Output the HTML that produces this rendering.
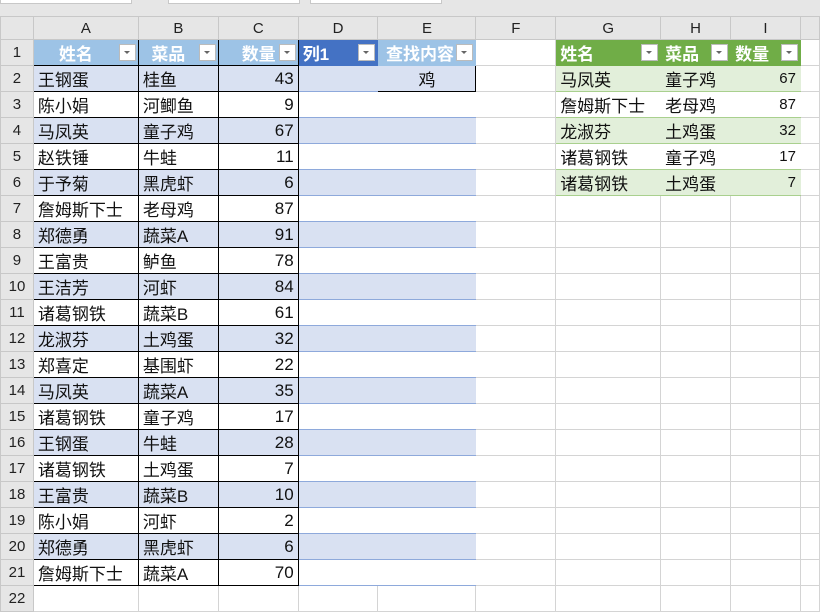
<!DOCTYPE html><html><head><meta charset="utf-8"><style>
body{margin:0;width:820px;height:602px;overflow:hidden;background:#fff;font-family:"Liberation Sans","Noto Sans CJK SC",sans-serif;position:relative}
.top{position:absolute;left:0;top:0;width:820px;height:16px;background:#e6e6e6;border-bottom:1px solid #c8c8c8}
.top i{position:absolute;top:0;height:3px;background:#fff;border:1px solid #c8c8c8;border-top:0}
table{position:absolute;left:0;top:16px;border-collapse:collapse;table-layout:fixed}
td{height:25px;border:1px solid #d4d4d4;padding:0 4px;font-size:17px;white-space:nowrap;overflow:hidden;color:#111}
tr.h td{height:22px;background:#e6e6e6;text-align:center;font-size:15px;border-color:#c8c8c8;color:#222}
td.r{background:#e6e6e6;text-align:center;font-size:15px;border-color:#c8c8c8;color:#222;padding:0}
.k{border:1px solid #000}
.n{text-align:right}
.b{background:#d9e1f2}
.bd{background:#d9e1f2;border-color:#d9e1f2 #d9e1f2 #8ea9db #d9e1f2}
.wd{border-color:#fff #fff #8ea9db #fff}
.hb{background:#9dc3e6;color:#fff;font-weight:bold;position:relative}
.hd{background:#4472c4;color:#fff;font-weight:bold;position:relative;border-color:#4472c4}
.hg{background:#70ad47;color:#fff;font-weight:bold;position:relative;border-color:#70ad47}
.g{background:#e2efda;border-color:#a9d08e #e2efda}
.gw{border-color:#a9d08e #fff}
.g.n,.gw.n{font-size:15px}
.dd{position:absolute;right:2px;top:4px;width:17px;height:17px;background:#fff;border:1px solid #bbb;box-sizing:border-box}
.dd:after{content:"";position:absolute;left:4px;top:6px;border-left:3px solid transparent;border-right:3px solid transparent;border-top:3px solid #666}
</style></head><body>
<div class="top"><i style="left:0;width:130px"></i><i style="left:168px;width:130px"></i><i style="left:310px;width:130px"></i></div>
<table>
<colgroup><col style="width:33px"><col style="width:105px"><col style="width:80px"><col style="width:80px"><col style="width:80px"><col style="width:98px"><col style="width:80px"><col style="width:105px"><col style="width:70px"><col style="width:70px"><col style="width:19px"></colgroup>
<tr class="h"><td></td><td>A</td><td>B</td><td>C</td><td>D</td><td>E</td><td>F</td><td>G</td><td>H</td><td>I</td><td></td></tr>
<tr><td class="r">1</td><td class="hb k" style="text-align:center;padding-right:24px">姓名<span class="dd"></span></td><td class="hb k" style="text-align:center;padding-right:24px">菜品<span class="dd"></span></td><td class="hb k" style="text-align:right;padding-right:22px">数量<span class="dd"></span></td><td class="hd">列1<span class="dd"></span></td><td class="hb" style="text-align:center;padding-right:18px;border-color:#9dc3e6">查找内容<span class="dd"></span></td><td></td><td class="hg">姓名<span class="dd"></span></td><td class="hg">菜品<span class="dd"></span></td><td class="hg">数量<span class="dd"></span></td><td></td></tr>
<tr><td class="r">2</td><td class="k b">王钢蛋</td><td class="k b">桂鱼</td><td class="k b n">43</td><td class="bd"></td><td class="k b" style="text-align:center">鸡</td><td></td><td class="g">马凤英</td><td class="g">童子鸡</td><td class="g n">67</td><td></td></tr>
<tr><td class="r">3</td><td class="k">陈小娟</td><td class="k">河鲫鱼</td><td class="k n">9</td><td class="wd"></td><td class="wd"></td><td></td><td class="gw">詹姆斯下士</td><td class="gw">老母鸡</td><td class="gw n">87</td><td></td></tr>
<tr><td class="r">4</td><td class="k b">马凤英</td><td class="k b">童子鸡</td><td class="k b n">67</td><td class="bd"></td><td class="bd"></td><td></td><td class="g">龙淑芬</td><td class="g">土鸡蛋</td><td class="g n">32</td><td></td></tr>
<tr><td class="r">5</td><td class="k">赵铁锤</td><td class="k">牛蛙</td><td class="k n">11</td><td class="wd"></td><td class="wd"></td><td></td><td class="gw">诸葛钢铁</td><td class="gw">童子鸡</td><td class="gw n">17</td><td></td></tr>
<tr><td class="r">6</td><td class="k b">于予菊</td><td class="k b">黑虎虾</td><td class="k b n">6</td><td class="bd"></td><td class="bd"></td><td></td><td class="g">诸葛钢铁</td><td class="g">土鸡蛋</td><td class="g n">7</td><td></td></tr>
<tr><td class="r">7</td><td class="k">詹姆斯下士</td><td class="k">老母鸡</td><td class="k n">87</td><td class="wd"></td><td class="wd"></td><td></td><td></td><td></td><td></td><td></td></tr>
<tr><td class="r">8</td><td class="k b">郑德勇</td><td class="k b">蔬菜A</td><td class="k b n">91</td><td class="bd"></td><td class="bd"></td><td></td><td></td><td></td><td></td><td></td></tr>
<tr><td class="r">9</td><td class="k">王富贵</td><td class="k">鲈鱼</td><td class="k n">78</td><td class="wd"></td><td class="wd"></td><td></td><td></td><td></td><td></td><td></td></tr>
<tr><td class="r">10</td><td class="k b">王洁芳</td><td class="k b">河虾</td><td class="k b n">84</td><td class="bd"></td><td class="bd"></td><td></td><td></td><td></td><td></td><td></td></tr>
<tr><td class="r">11</td><td class="k">诸葛钢铁</td><td class="k">蔬菜B</td><td class="k n">61</td><td class="wd"></td><td class="wd"></td><td></td><td></td><td></td><td></td><td></td></tr>
<tr><td class="r">12</td><td class="k b">龙淑芬</td><td class="k b">土鸡蛋</td><td class="k b n">32</td><td class="bd"></td><td class="bd"></td><td></td><td></td><td></td><td></td><td></td></tr>
<tr><td class="r">13</td><td class="k">郑喜定</td><td class="k">基围虾</td><td class="k n">22</td><td class="wd"></td><td class="wd"></td><td></td><td></td><td></td><td></td><td></td></tr>
<tr><td class="r">14</td><td class="k b">马凤英</td><td class="k b">蔬菜A</td><td class="k b n">35</td><td class="bd"></td><td class="bd"></td><td></td><td></td><td></td><td></td><td></td></tr>
<tr><td class="r">15</td><td class="k">诸葛钢铁</td><td class="k">童子鸡</td><td class="k n">17</td><td class="wd"></td><td class="wd"></td><td></td><td></td><td></td><td></td><td></td></tr>
<tr><td class="r">16</td><td class="k b">王钢蛋</td><td class="k b">牛蛙</td><td class="k b n">28</td><td class="bd"></td><td class="bd"></td><td></td><td></td><td></td><td></td><td></td></tr>
<tr><td class="r">17</td><td class="k">诸葛钢铁</td><td class="k">土鸡蛋</td><td class="k n">7</td><td class="wd"></td><td class="wd"></td><td></td><td></td><td></td><td></td><td></td></tr>
<tr><td class="r">18</td><td class="k b">王富贵</td><td class="k b">蔬菜B</td><td class="k b n">10</td><td class="bd"></td><td class="bd"></td><td></td><td></td><td></td><td></td><td></td></tr>
<tr><td class="r">19</td><td class="k">陈小娟</td><td class="k">河虾</td><td class="k n">2</td><td class="wd"></td><td class="wd"></td><td></td><td></td><td></td><td></td><td></td></tr>
<tr><td class="r">20</td><td class="k b">郑德勇</td><td class="k b">黑虎虾</td><td class="k b n">6</td><td class="bd"></td><td class="bd"></td><td></td><td></td><td></td><td></td><td></td></tr>
<tr><td class="r">21</td><td class="k">詹姆斯下士</td><td class="k">蔬菜A</td><td class="k n">70</td><td class="wd"></td><td class="wd"></td><td></td><td></td><td></td><td></td><td></td></tr>
<tr><td class="r">22</td><td></td><td></td><td></td><td></td><td></td><td></td><td></td><td></td><td></td><td></td></tr>
</table>
</body></html>
